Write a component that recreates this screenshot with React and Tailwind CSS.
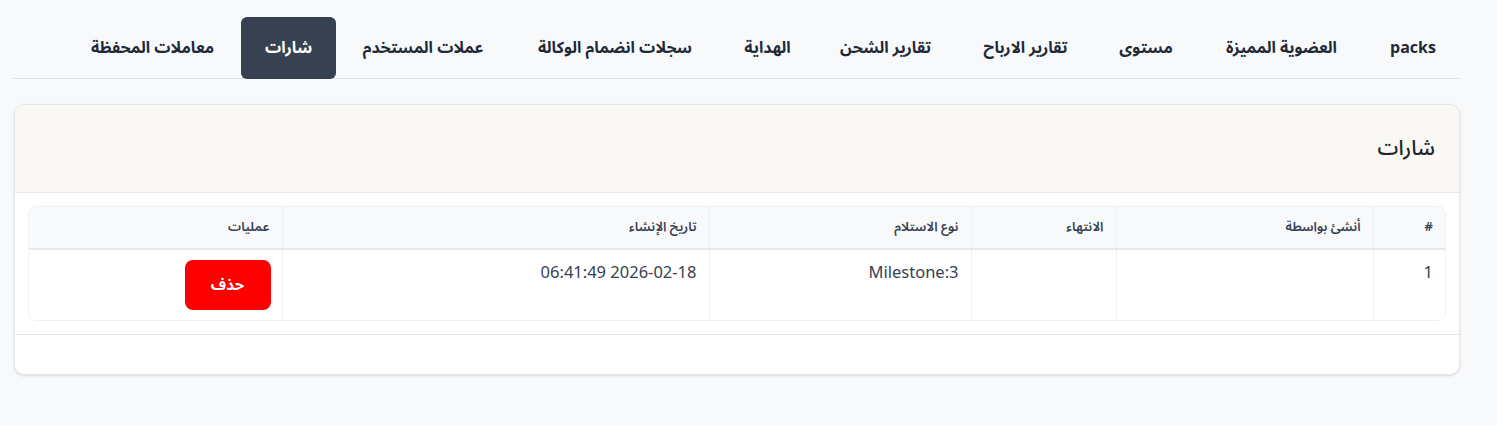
import React from 'react';

const tabs = [
  { label: 'packs', w: 'w-[94px]' },
  { label: 'العضوية المميزة', w: 'w-[169px]' },
  { label: 'مستوى', w: 'w-[102px]' },
  { label: 'تقارير الارباح', w: 'w-[139px]' },
  { label: 'تقارير الشحن', w: 'w-[141px]' },
  { label: 'الهداية', w: 'w-[95px]' },
  { label: 'سجلات انضمام الوكالة', w: 'w-[210px]' },
  { label: 'عملات المستخدم', w: 'w-[174px]' },
  { label: 'شارات', w: 'w-[95px]' },
  { label: 'معاملات المحفظة', w: 'w-[177px]' },
];

const columns = [
  { label: '#', width: 'w-[72px]' },
  { label: 'أنشئ بواسطة', width: 'w-[257px]' },
  { label: 'الانتهاء', width: 'w-[145px]' },
  { label: 'نوع الاستلام', width: 'w-[262px]' },
  { label: 'تاريخ الإنشاء', width: 'w-[427px]' },
  { label: 'عمليات', width: '' },
];

export default function App() {
  const active = 'شارات';

  return (
    <div
      dir="rtl"
      className="min-h-[426px] bg-[#f8f9fa] pl-[13px] pr-[37px] pt-[17px] text-[#212529]"
      style={{ fontFamily: '"Noto Sans Arabic", "Noto Sans", "DejaVu Sans", sans-serif' }}
    >
      {/* Tabs */}
      <div className="flex border-b border-[#dee2e6]">
        {tabs.map((t) => (
          <button
            key={t.label}
            className={`${t.w} -mb-px h-[62px] shrink-0 rounded-md text-center text-[16px] font-bold ${
              t.label === active ? 'bg-[#374151] text-white' : 'text-[#1f2937]'
            }`}
          >
            {t.label}
          </button>
        ))}
      </div>

      {/* Card */}
      <div className="mt-[25px] ml-[1px] overflow-hidden rounded-[10px] border border-[#e5e7eb] bg-white shadow-sm">
        <div className="flex h-[88px] items-center border-b border-[#e5e7eb] bg-[#f9f8f5] px-6">
          <h2 className="text-[21px] font-medium text-[#212529]">شارات</h2>
        </div>

        <div className="p-[13px]">
          <div className="overflow-hidden rounded-lg border border-[#eef0f2]">
            <table className="w-full border-collapse text-[#374151]">
              <thead>
                <tr className="h-[42px] border-b-2 border-[#e5e7eb] bg-[#f8f9fa]">
                  {columns.map((c, i) => (
                    <th
                      key={c.label}
                      className={`${c.width} px-3 text-right text-[13px] font-semibold ${
                        i < columns.length - 1 ? 'border-l border-[#eef0f2]' : ''
                      }`}
                    >
                      {c.label}
                    </th>
                  ))}
                </tr>
              </thead>
              <tbody>
                <tr className="h-[71px] align-top text-[16.5px]">
                  <td className="border-l border-[#eef0f2] px-3 pt-[11px]">1</td>
                  <td className="border-l border-[#eef0f2] px-3 pt-[11px]"></td>
                  <td className="border-l border-[#eef0f2] px-3 pt-[11px]"></td>
                  <td className="border-l border-[#eef0f2] px-3 pt-[11px]">Milestone:3</td>
                  <td className="border-l border-[#eef0f2] px-3 pt-[11px]">2026-02-18 06:41:49</td>
                  <td className="pl-3 pr-[11px] pt-[10px]">
                    <button className="h-[50px] w-[86px] rounded-lg bg-[#ff0000] text-[15px] font-bold text-white">
                      حذف
                    </button>
                  </td>
                </tr>
              </tbody>
            </table>
          </div>
        </div>

        <div className="h-[40px] border-t border-[#e5e7eb]"></div>
      </div>
    </div>
  );
}
